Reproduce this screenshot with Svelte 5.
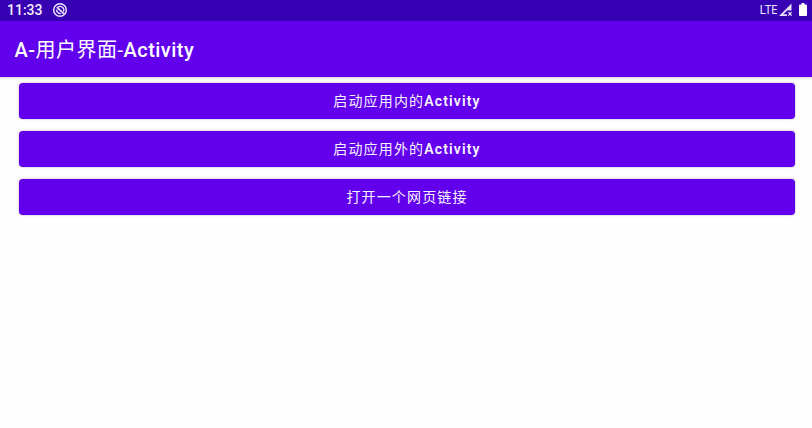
<script>
  const actions = [
    { text: '启动应用内的', latin: 'Activity' },
    { text: '启动应用外的', latin: 'Activity' },
    { text: '打开一个网页链接', latin: '' }
  ];
</script>

<div class="screen">
  <header class="status">
    <time>11:33</time>
    <svg class="dnd" width="16" height="16" viewBox="0 0 16 16" fill="none" stroke="#e9e2fb">
      <circle cx="8" cy="8" r="6.300" stroke-width="1.500" />
      <path d="M6 5.300a3.500 3.500 0 0 1 5.400 4.200M4.600 7.500a3.600 3.600 0 0 0 4.200 4" stroke-width="1.300" />
      <path d="M4.800 5.200L12.200 12.200" stroke-width="1.700" />
    </svg>
    <span class="spacer"></span>
    <span class="lte">LTE</span>
    <svg class="signal" width="14" height="14" viewBox="0 0 14 14">
      <path d="M0 13L12.500 .5V7.500H8.500V7L4.500 11.200H8V13z" fill="#e6defa" />
      <path d="M9.400 9.200l3.200 3.400M12.600 9.200l-3.200 3.400" stroke="#efeafd" stroke-width="1.200" />
    </svg>
    <svg class="battery" width="8" height="13" viewBox="0 0 8 13">
      <path d="M2.500 0h3v1.400H7q1 0 1 1V12q0 1-1 1H1q-1 0-1-1V2.400q0-1 1-1h1.500z" fill="#fff" />
    </svg>
  </header>
  <div class="appbar"><h1>A-<span>用户界面-</span>Activity</h1></div>
  <main>
    {#each actions as action}
      <button>{action.text}<b>{action.latin}</b></button>
    {/each}
  </main>
</div>

<style>
  .screen {
    height: 428px;
    overflow: hidden;
    background: #fefefe;
    font-family: Roboto, 'Noto Sans CJK SC', sans-serif;
  }
  .status {
    display: flex;
    align-items: center;
    box-sizing: border-box;
    height: 21px;
    padding: 0 5px 2px 7px;
    background: #3700b3;
    color: #f3effd;
  }
  time {
    width: 45px;
    font-size: 14px;
    font-weight: 500;
  }
  .spacer {
    flex: 1;
  }
  .lte {
    font-family: 'Noto Sans', sans-serif;
    font-size: 12px;
    line-height: 16px;
    margin-right: 2px;
    letter-spacing: -0.6px;
    color: #ece5fb;
  }
  .battery {
    margin-left: 6px;
  }
  .appbar {
    display: flex;
    align-items: center;
    box-sizing: border-box;
    height: 56px;
    padding-top: 2px;
    background: #6200ee;
    box-shadow: 0 1px 2px rgba(0, 0, 0, 0.18);
  }
  h1 {
    margin: 0 0 0 14.500px;
    font-size: 20px;
    line-height: 28px;
    font-weight: 500;
    letter-spacing: 0.480px;
    white-space: nowrap;
    color: #fff;
  }
  h1 span {
    font-weight: 400;
  }
  main {
    display: flex;
    flex-direction: column;
    gap: 12px;
    padding: 6px 17.500px 0 18.500px;
  }
  button {
    height: 36px;
    padding: 0 0 0 1px;
    border: 0;
    border-radius: 4px;
    background: #6200ee;
    color: #f8f4ff;
    font: 400 14px/36px Roboto, 'Noto Sans CJK SC', sans-serif;
    letter-spacing: 1.150px;
    box-shadow: 0 0 2px rgba(50, 20, 100, 0.45);
  }
  b {
    font-weight: 600;
  }
</style>
